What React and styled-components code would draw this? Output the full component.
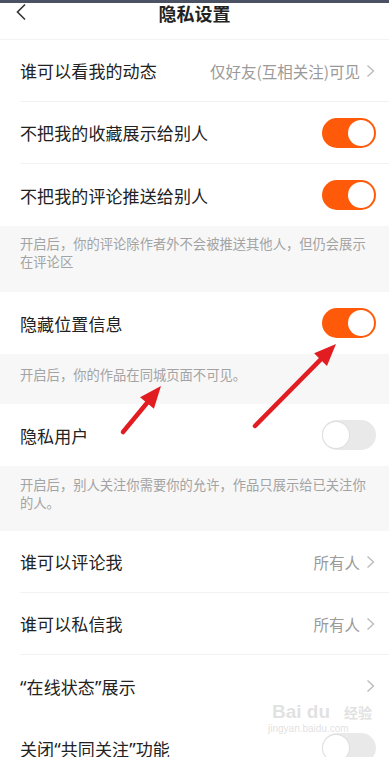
import * as React from 'react';
import styled, { createGlobalStyle } from 'styled-components';

const GlobalStyle = createGlobalStyle`
  html, body {
    margin: 0;
    padding: 0;
    background: #ffffff;
  }
  body {
    font-family: "Noto Sans CJK SC", "Noto Sans", sans-serif;
    -webkit-font-smoothing: antialiased;
  }
`;

const Page = styled.div`
  position: relative;
  width: 389px;
  height: 757px;
  overflow: hidden;
  background: #ffffff;
`;

const StatusEdge = styled.div`
  height: 3px;
  background: #4b5263;
`;

const Header = styled.header`
  position: relative;
  height: 36px;
  display: flex;
  justify-content: center;
  align-items: flex-start;
  border-bottom: 1px solid #f3f3f3;
`;

const Title = styled.h1`
  margin: 0;
  font-size: 18px;
  line-height: 20px;
  font-weight: 700;
  color: #222;
`;

const BackButton = styled.button`
  position: absolute;
  left: 14px;
  top: 0;
  border: 0;
  padding: 0;
  background: none;
  display: flex;
`;

const Row = styled.div`
  height: 62px;
  margin-left: 20px;
  padding-right: 14px;
  display: flex;
  align-items: center;
  justify-content: space-between;
  border-bottom: ${(p) => (p.$last ? '0' : '1px solid #f2f2f2')};
  box-sizing: border-box;
`;

const Label = styled.span`
  font-size: 17px;
  color: #222;
  letter-spacing: 0.1px;
  white-space: nowrap;
`;

const Quote = styled.span`
  font-family: "Noto Sans", "Liberation Sans", sans-serif;
  font-size: 18px;
`;

const Value = styled.span`
  display: flex;
  align-items: center;
  gap: 6px;
  font-size: 15.5px;
  color: #9a9a9a;
`;

const Note = styled.div`
  background: #f7f7f7;
  padding: ${(p) => p.$pad};
  font-size: 13.3px;
  line-height: 18px;
  color: #a3a3a3;
`;

const NoteLine = styled.span`
  display: block;
  white-space: nowrap;
`;

const Track = styled.span`
  position: relative;
  width: 54px;
  height: 30px;
  border-radius: 15px;
  background: ${(p) => (p.$on ? '#ff5a0a' : '#e9e9e9')};
  display: block;
  margin-right: -1px;
  flex-shrink: 0;
`;

const Knob = styled.span`
  position: absolute;
  top: 2px;
  left: ${(p) => (p.$on ? '26px' : '1px')};
  width: 26px;
  height: 26px;
  border-radius: 50%;
  background: #fff;
  box-shadow: ${(p) => (p.$on ? 'none' : '0 0 0 1px #dedede')};
`;

const Overlay = styled.svg`
  position: absolute;
  left: 0;
  top: 0;
  pointer-events: none;
`;

const Watermark = styled.div`
  position: absolute;
  left: 268px;
  top: 702px;
  color: rgba(200, 200, 200, 0.55);
  font-family: "Liberation Sans", sans-serif;
  line-height: 1;
`;

const WmTop = styled.div`
  font-size: 19px;
  font-weight: 700;
  display: flex;
  gap: 14px;
  padding-left: 4px;
  span:last-child {
    font-family: "Noto Sans CJK SC", sans-serif;
    font-size: 14px;
    padding-top: 3px;
  }
`;

const WmBottom = styled.div`
  font-size: 10px;
  margin-top: 3px;
`;

function Chevron({ color = '#bcbcbc' }) {
  return (
    <svg width="9" height="14" viewBox="0 0 9 14">
      <path d="M1.5 1.5 L7.5 7 L1.5 12.5" fill="none" stroke={color} strokeWidth="1.4" />
    </svg>
  );
}

function Switch({ on }) {
  return (
    <Track $on={on}>
      <Knob $on={on} />
    </Track>
  );
}

function Arrow({ x1, y1, x2, y2 }) {
  const a = Math.atan2(y2 - y1, x2 - x1);
  const len = 22;
  const w = 9;
  const bx = x2 - Math.cos(a) * len;
  const by = y2 - Math.sin(a) * len;
  const px = -Math.sin(a) * w;
  const py = Math.cos(a) * w;
  return (
    <g>
      <line x1={x1} y1={y1} x2={bx} y2={by} stroke="#e21d22" strokeWidth="4.5" strokeLinecap="round" />
      <polygon points={`${x2},${y2} ${bx + px},${by + py} ${bx - px},${by - py}`} fill="#e21d22" />
    </g>
  );
}

export default function App() {
  return (
    <Page>
      <GlobalStyle />
      <StatusEdge />
      <Header>
        <BackButton>
          <svg width="14" height="18" viewBox="0 0 14 18">
            <path d="M11 1.5 L3.5 9 L11 16.5" fill="none" stroke="#333" strokeWidth="1.6" />
          </svg>
        </BackButton>
        <Title>隐私设置</Title>
      </Header>

      <Row>
        <Label>谁可以看我的动态</Label>
        <Value>仅好友(互相关注)可见<Chevron /></Value>
      </Row>
      <Row>
        <Label>不把我的收藏展示给别人</Label>
        <Switch on />
      </Row>
      <Row $last>
        <Label>不把我的评论推送给别人</Label>
        <Switch on />
      </Row>
      <Note $pad="9px 16px 21px 20px">
        <NoteLine>开启后，你的评论除作者外不会被推送其他人，但仍会展示</NoteLine>
        <NoteLine>在评论区</NoteLine>
      </Note>

      <Row $last>
        <Label>隐藏位置信息</Label>
        <Switch on />
      </Row>
      <Note $pad="12px 16px 20px 20px">
        <NoteLine>开启后，你的作品在同城页面不可见。</NoteLine>
      </Note>

      <Row $last>
        <Label>隐私用户</Label>
        <Switch on={false} />
      </Row>
      <Note $pad="10px 16px 19px 20px">
        <NoteLine>开启后，别人关注你需要你的允许，作品只展示给已关注你</NoteLine>
        <NoteLine>的人。</NoteLine>
      </Note>

      <Row>
        <Label>谁可以评论我</Label>
        <Value>所有人<Chevron /></Value>
      </Row>
      <Row>
        <Label>谁可以私信我</Label>
        <Value>所有人<Chevron /></Value>
      </Row>
      <Row $last>
        <Label><Quote>“</Quote>在线状态<Quote>”</Quote>展示</Label>
        <Value><Chevron /></Value>
      </Row>
      <Row $last>
        <Label>关闭<Quote>“</Quote>共同关注<Quote>”</Quote>功能</Label>
        <Switch on={false} />
      </Row>

      <Watermark>
        <WmTop><span>Bai du</span><span>经验</span></WmTop>
        <WmBottom>jingyan.baidu.com</WmBottom>
      </Watermark>

      <Overlay width="389" height="757" viewBox="0 0 389 757">
        <Arrow x1={123} y1={432} x2={161} y2={386} />
        <Arrow x1={255} y1={426} x2={336} y2={344} />
      </Overlay>
    </Page>
  );
}
